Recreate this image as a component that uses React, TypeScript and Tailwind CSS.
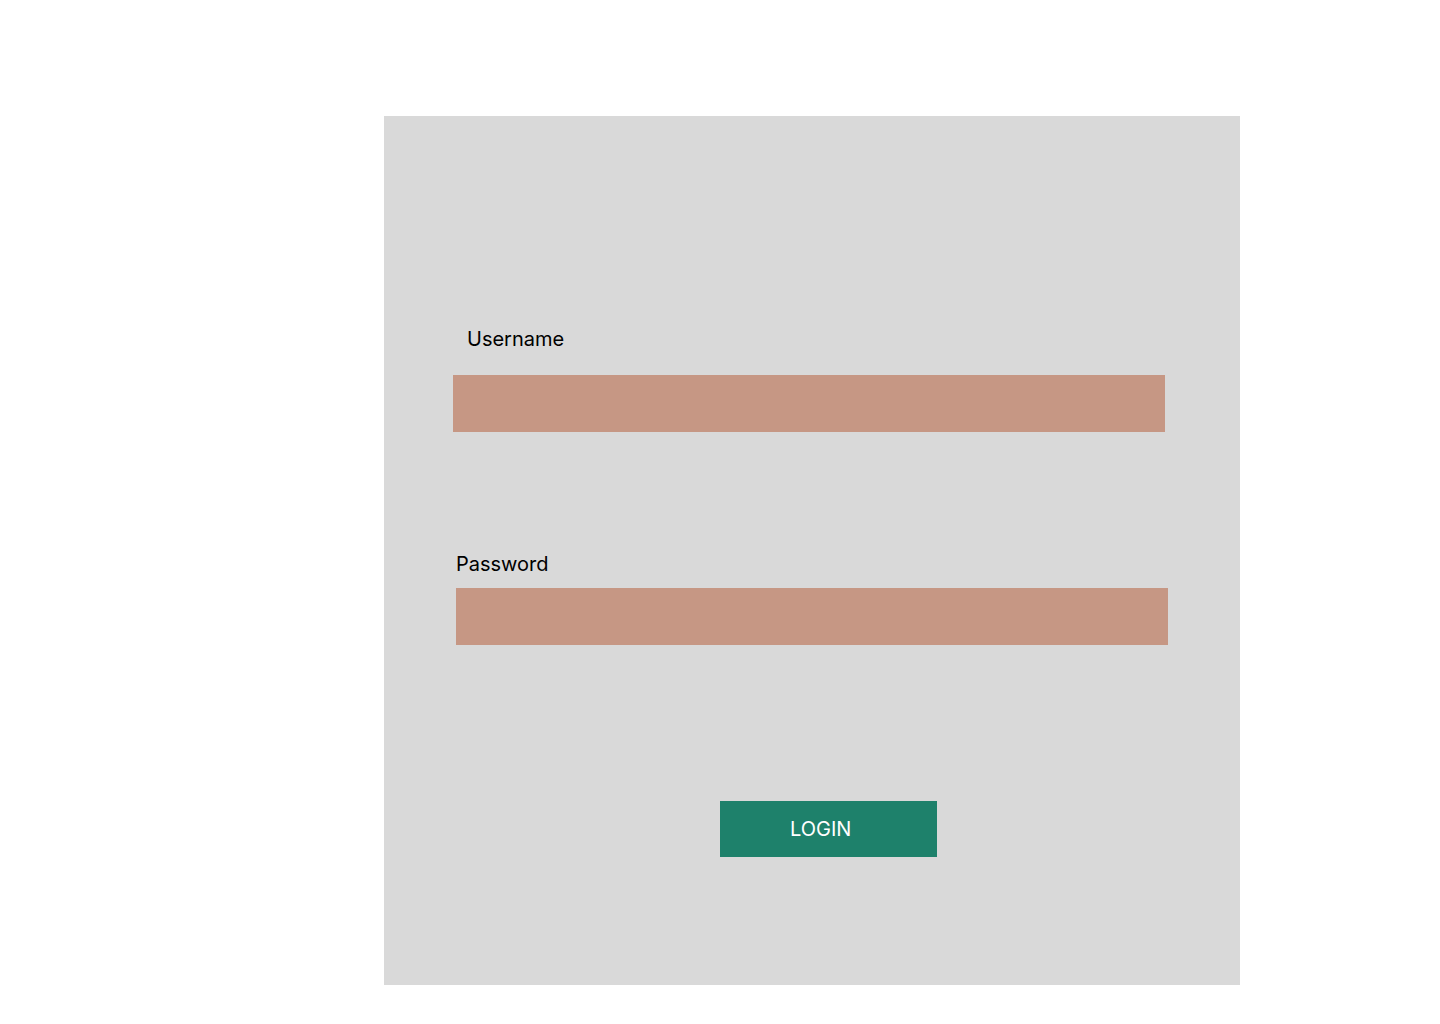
export default function App() {
  return (
    <div className="min-h-screen w-full bg-white pt-[116px] pl-[384px]" style={{ fontFamily: "Inter, 'Noto Sans', sans-serif" }}>
      <div className="w-[856px] h-[869px] bg-[#d9d9d9] pt-[211px] flex flex-col items-start">
        <label className="ml-[83px] text-[20px] leading-[24px] text-black">Username</label>
        <div className="ml-[69px] mt-[24px] w-[712px] h-[57px] bg-[#c69784]" />
        <label className="ml-[72px] mt-[120px] text-[20px] leading-[24px] text-black">Password</label>
        <div className="ml-[72px] mt-[12px] w-[712px] h-[57px] bg-[#c69784]" />
        <button className="ml-[336px] mt-[156px] w-[217px] h-[56px] bg-[#1e816b] text-white text-[20px] leading-[24px] text-left pl-[70px] pt-[0px]">
          LOGIN
        </button>
      </div>
    </div>
  );
}
